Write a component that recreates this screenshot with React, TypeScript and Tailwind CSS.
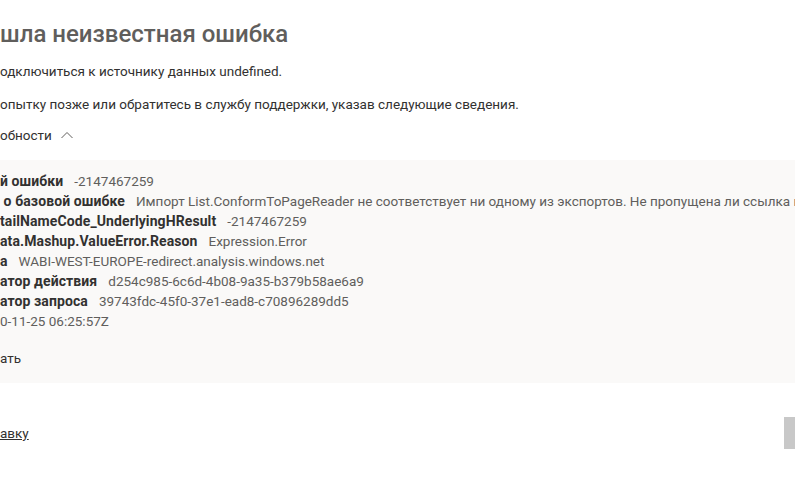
import React from "react";

const rows: [string, string][] = [
  ["й ошибки", "-2147467259"],
  [" о базовой ошибке", "Импорт List.ConformToPageReader не соответствует ни одному из экспортов. Не пропущена ли ссылка на модуль?"],
  ["tailNameCode_UnderlyingHResult", "-2147467259"],
  ["ata.Mashup.ValueError.Reason", "Expression.Error"],
  ["а", "WABI-WEST-EUROPE-redirect.analysis.windows.net"],
  ["атор действия", "d254c985-6c6d-4b08-9a35-b379b58ae6a9"],
  ["атор запроса", "39743fdc-45f0-37e1-ead8-c70896289dd5"],
  ["", "0-11-25 06:25:57Z"],
];

export default function App() {
  return (
    <div
      className="w-[795px] h-[478px] overflow-hidden bg-white text-[#323130]"
      style={{ fontFamily: "Roboto, 'Noto Sans', sans-serif" }}
    >
      <div className="pt-[18px] text-[24px] leading-[32px] font-medium text-[#605e5c] whitespace-nowrap">
        шла неизвестная ошибка
      </div>
      <p className="mt-[11px] text-[13.5px] leading-[20px] whitespace-nowrap">
        одключиться к источнику данных undefined.
      </p>
      <p className="mt-[13px] text-[13.5px] leading-[20px] whitespace-nowrap">
        опытку позже или обратитесь в службу поддержки, указав следующие сведения.
      </p>
      <div className="mt-[11px] flex items-center gap-[9px] text-[13.5px] leading-[20px]">
        <span>обности</span>
        <svg width="12" height="8" viewBox="0 0 12 8" className="text-[#605e5c]">
          <polyline points="0.5,7 6,1.5 11.5,7" fill="none" stroke="currentColor" strokeWidth="1" />
        </svg>
      </div>
      <div className="mt-[15px] bg-[#faf9f8] pt-[11px] pb-[15px] leading-[20px]">
        {rows.map(([label, value], i) => (
          <div key={i} className="flex whitespace-nowrap gap-[11px]">
            {label && (
              <span className="text-[14px] font-bold text-[#323130] tracking-[0.1px]" style={{ whiteSpace: "pre" }}>
                {label}
              </span>
            )}
            <span className="text-[13.5px] text-[#605e5c]">{value}</span>
          </div>
        ))}
        <div className="mt-[17px] text-[13.5px]">ать</div>
      </div>
      <div className="mt-[34px] flex items-center justify-between h-[32px]">
        <a className="text-[13.5px] leading-[20px] underline text-[#323130]">авку</a>
        <div className="w-[11px] h-[32px] bg-[#c8c8c8]" />
      </div>
    </div>
  );
}
